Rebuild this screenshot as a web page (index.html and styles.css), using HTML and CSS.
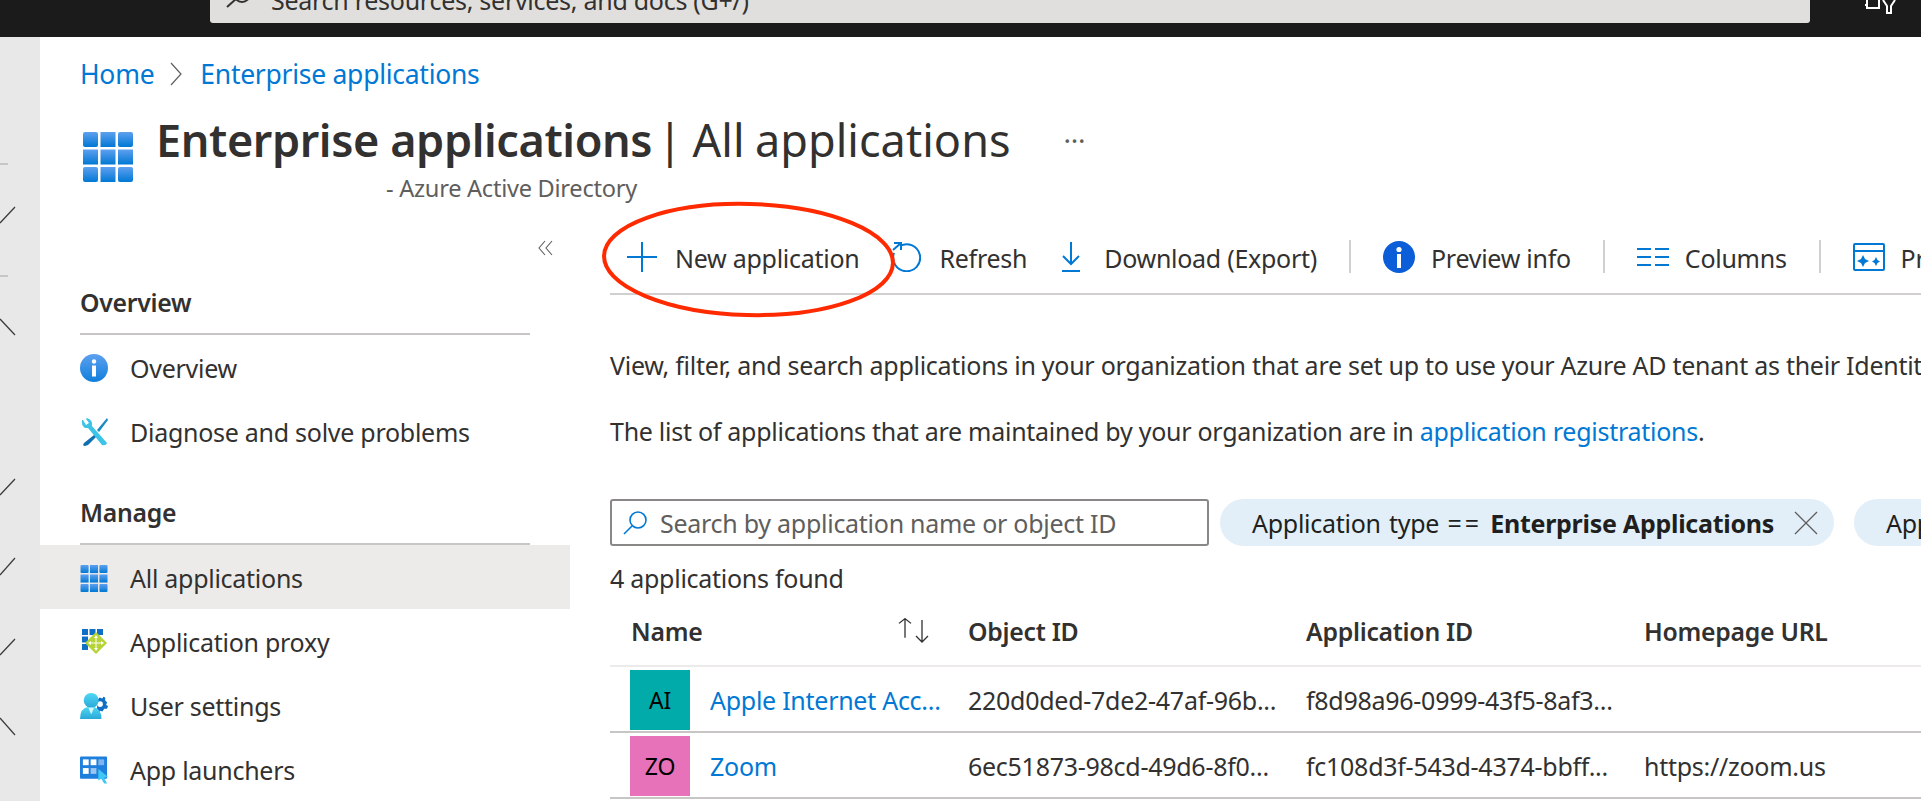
FILE: index.html
```html
<!DOCTYPE html>
<html lang="en">
<head>
    <meta charset="UTF-8">
    <meta name="viewport" content="width=device-width, initial-scale=1.0">
    <title>Enterprise applications | All applications</title>
    <link rel="stylesheet" href="styles.css">
</head>
<body>
    <svg width="0" height="0" class="defs">
        <defs>
            <linearGradient id="gridBlue" x1="0" y1="0" x2="0" y2="1">
                <stop offset="0" stop-color="#5ea0ef"/>
                <stop offset="1" stop-color="#0078d4"/>
            </linearGradient>
            <linearGradient id="infoBlue" x1="0" y1="0" x2="0" y2="1">
                <stop offset="0" stop-color="#5ea0ef"/>
                <stop offset="1" stop-color="#0f7fdc"/>
            </linearGradient>
            <linearGradient id="cyanGrad" x1="0" y1="0" x2="0" y2="1">
                <stop offset="0" stop-color="#4fd8f5"/>
                <stop offset="1" stop-color="#2aa8d8"/>
            </linearGradient>
            <g id="grid9">
                <rect x="0" y="0" width="15" height="15" rx="2"/><rect x="17.5" y="0" width="15" height="15"/><rect x="35" y="0" width="15" height="15" rx="2"/>
                <rect x="0" y="17.5" width="15" height="15"/><rect x="17.5" y="17.5" width="15" height="15"/><rect x="35" y="17.5" width="15" height="15"/>
                <rect x="0" y="35" width="15" height="15" rx="2"/><rect x="17.5" y="35" width="15" height="15"/><rect x="35" y="35" width="15" height="15" rx="2"/>
            </g>
        </defs>
    </svg>

    <header class="topbar">
        <div class="globalsearch">
            <svg class="globalsearch-icon" viewBox="0 0 24 24" width="24" height="24"><path d="M1 23 L10 15" stroke="#323130" stroke-width="2" fill="none"/><circle cx="16" cy="10" r="8" stroke="#323130" stroke-width="2" fill="none"/></svg>
            <span>Search resources, services, and docs (G+/)</span>
        </div>
        <svg class="topbar-icon" viewBox="0 0 32 14" width="32" height="14">
            <path d="M3 0 V5 H1 M3 5 V8 H15 V0 M19 0 L23 6 V13 H27 V6 L31 0" stroke="#fff" stroke-width="2" fill="none"/>
        </svg>
    </header>

    <div class="shell">
        <nav class="rail">
            <svg width="40" height="764" viewBox="0 0 40 764">
                <g stroke="#3b3a39" stroke-width="1.2" fill="none">
                    <path d="M0 127 H8" stroke="#c8c6c4" stroke-width="2"/>
                    <path d="M0 186 L15 170"/>
                    <path d="M0 239 H8" stroke="#c8c6c4" stroke-width="2"/>
                    <path d="M0 282 L15 298"/>
                    <path d="M0 458 L15 442"/>
                    <path d="M0 538 L15 521"/>
                    <path d="M0 618 L15 602"/>
                    <path d="M0 681 L15 698"/>
                </g>
            </svg>
        </nav>

        <div class="page">
            <div class="crumbs">
                <a href="#">Home</a>
                <svg class="crumb-sep" viewBox="0 0 12 24" width="12" height="24"><path d="M1 1 L11 12 L1 23" stroke="#605e5c" stroke-width="1.2" fill="none"/></svg>
                <a href="#">Enterprise applications</a>
            </div>

            <div class="pagehead">
                <svg class="pagehead-icon" viewBox="0 0 50 50" width="50" height="50"><use href="#grid9" fill="url(#gridBlue)"/></svg>
                <div class="pagehead-text">
                    <h1><b>Enterprise applications</b> <span class="title-rest">| All applications</span></h1>
                    <div class="subtitle">- Azure Active Directory</div>
                </div>
                <div class="more">···</div>
            </div>

            <div class="columns">
                <aside class="sidebar">
                    <div class="collapse">
                        <svg viewBox="0 0 16 16" width="16" height="16"><path d="M7 1 L1 8 L7 15 M14 1 L8 8 L14 15" stroke="#605e5c" stroke-width="1.1" fill="none"/></svg>
                    </div>
                    <div class="side-head">Overview</div>
                    <a class="side-item" href="#">
                        <svg viewBox="0 0 28 28" width="28" height="28"><circle cx="14" cy="14" r="14" fill="url(#infoBlue)"/><circle cx="14" cy="7.5" r="2.2" fill="#fff"/><rect x="12" y="11.5" width="4" height="11" fill="#fff"/></svg>
                        Overview
                    </a>
                    <a class="side-item" href="#">
                        <svg viewBox="0 0 28 28" width="28" height="28">
                            <path d="M27 0 L17 12 L19 14 L28 2 Z" fill="#1a8ac4"/>
                            <path d="M14 17 L4 25 Q2 28 5 28 L8 27 L17 18 L15 15 Z" fill="#0f6fb0"/>
                            <path d="M2 2 Q1 7 5 10 L8 10 L22 27 Q26 28 27 25 L12 8 Q13 2 7 0 L6 1 L9 5 L6 7 L3 2 Z" fill="#3cc3e6"/>
                        </svg>
                        Diagnose and solve problems
                    </a>
                    <div class="side-head side-head-2">Manage</div>
                    <a class="side-item side-item-active" href="#">
                        <svg viewBox="0 0 50 50" width="27" height="27"><use href="#grid9" fill="url(#gridBlue)"/></svg>
                        All applications
                    </a>
                    <a class="side-item" href="#">
                        <svg viewBox="0 0 28 28" width="28" height="28">
                            <g fill="#0f6fc6"><rect x="2" y="1" width="6" height="6"/><rect x="9.5" y="1" width="6" height="6"/><rect x="17" y="1" width="6" height="6"/><rect x="2" y="8.5" width="6" height="6"/><rect x="2" y="16" width="6" height="6"/></g>
                            <path d="M16 4 L27 15 L16 26 L5 15 Z" fill="#b4d334"/>
                            <path d="M16 7 L18 10 H14 Z M16 23 L18 20 H14 Z M8 15 L11 13 V17 Z M24 15 L21 13 V17 Z" fill="#fff"/>
                            <path d="M11 15 H21 M16 10 V20" stroke="#fff" stroke-width="1"/>
                        </svg>
                        Application proxy
                    </a>
                    <a class="side-item" href="#">
                        <svg viewBox="0 0 30 28" width="30" height="28">
                            <path d="M19 7 L21 5 L24 6 L25 4 L27 5 L27 8 L29 10 L28 13 L30 14 L29 17 L26 17 L24 20 L22 19 L20 21 L18 19 Z" fill="#0f6fc6"/>
                            <circle cx="21.5" cy="12" r="3" fill="#fff"/>
                            <circle cx="12" cy="8" r="8" fill="url(#cyanGrad)"/>
                            <path d="M0 28 Q0 16 9 15 H15 Q23 17 23 28 Z" fill="url(#cyanGrad)"/>
                            <path d="M9 16 H15 L12 23 Z" fill="#d8f5fc"/>
                        </svg>
                        User settings
                    </a>
                    <a class="side-item" href="#">
                        <svg viewBox="0 0 29 28" width="29" height="28">
                            <rect x="0" y="0" width="28" height="23" rx="1" fill="#1f7fdc"/>
                            <rect x="3" y="3" width="6" height="6" fill="#fff"/><rect x="11" y="3" width="6" height="6" fill="#fff"/><rect x="19" y="3" width="6" height="6" fill="#7fb4ee"/>
                            <rect x="3" y="12" width="6" height="6" fill="#fff"/><rect x="11" y="12" width="6" height="6" fill="#9cc6f2"/>
                            <path d="M19 13 L29 21 L25 22 L28 28 L25 28 L22 23 L19 25 Z" fill="#3fc8f5"/>
                        </svg>
                        App launchers
                    </a>
                </aside>

                <main class="content">
                    <div class="toolbar">
                        <button class="tool tool-new">
                            <svg viewBox="0 0 30 30" width="30" height="30"><path d="M15 0 V30 M0 15 H30" stroke="#0078d4" stroke-width="2" fill="none"/></svg>
                            New application
                        </button>
                        <button class="tool tool-refresh">
                            <svg viewBox="0 0 31 30" width="31" height="30"><path d="M9 3 A13.500 13.500 0 1 1 3 10" stroke="#0078d4" stroke-width="2" fill="none" transform="translate(1 1)"/><path d="M3 8 L11 1 M4 1 H11 V8" stroke="#0078d4" stroke-width="2" fill="none"/></svg>
                            Refresh
                        </button>
                        <button class="tool tool-download">
                            <svg viewBox="0 0 18 30" width="18" height="30"><path d="M9 0 V22 M1 14 L9 22 L17 14 M0 29 H18" stroke="#0078d4" stroke-width="2" fill="none"/></svg>
                            Download (Export)
                        </button>
                        <span class="tool-sep"></span>
                        <button class="tool tool-preview">
                            <svg viewBox="0 0 32 32" width="32" height="32"><circle cx="16" cy="16" r="16" fill="#0b5ed7"/><circle cx="16" cy="8.5" r="2.6" fill="#fff"/><rect x="14" y="13" width="4" height="14" fill="#fff"/></svg>
                            Preview info
                        </button>
                        <span class="tool-sep"></span>
                        <button class="tool tool-columns">
                            <svg viewBox="0 0 32 18" width="32" height="18"><path d="M0 1 H14 M18 1 H32 M0 9 H14 M18 9 H32 M0 17 H14 M18 17 H32" stroke="#0078d4" stroke-width="2" fill="none"/></svg>
                            Columns
                        </button>
                        <span class="tool-sep"></span>
                        <button class="tool tool-features">
                            <svg viewBox="0 0 32 28" width="32" height="28"><rect x="1" y="1" width="30" height="26" rx="1" stroke="#0078d4" stroke-width="2" fill="none"/><path d="M1 8 H31" stroke="#0078d4" stroke-width="2"/><path d="M10 12 L12 16 L16 18 L12 20 L10 24 L8 20 L4 18 L8 16 Z M23 14 L24.5 17 L27 18.500 L24.500 20 L23 23 L21.500 20 L19 18.500 L21.500 17 Z" fill="#0078d4"/></svg>
                            Preview features
                        </button>
                    </div>

                    <div class="ellipse">
                        <svg viewBox="0 0 297 119" width="297" height="119"><ellipse cx="148.500" cy="59.500" rx="144.500" ry="55.500" transform="rotate(1.500 148.500 59.500)" stroke="#ff2a00" stroke-width="4" fill="none"/></svg>
                    </div>

                    <p class="intro">View, filter, and search applications in your organization that are set up to use your Azure AD tenant as their Identity Provider.</p>
                    <p class="intro">The list of applications that are maintained by your organization are in <a href="#">application registrations</a>.</p>

                    <div class="filters">
                        <div class="searchbox">
                            <svg viewBox="0 0 24 24" width="24" height="24"><circle cx="15" cy="9" r="8" stroke="#0078d4" stroke-width="1.600" fill="none"/><path d="M1 23 L9 15" stroke="#0078d4" stroke-width="1.600"/></svg>
                            <span>Search by application name or object ID</span>
                        </div>
                        <div class="chip">
                            <span class="chip-label">Application type <span class="chip-op">==</span> <b>Enterprise Applications</b></span>
                            <svg viewBox="0 0 24 24" width="24" height="24"><path d="M1 1 L23 23 M23 1 L1 23" stroke="#605e5c" stroke-width="1.300"/></svg>
                        </div>
                        <div class="chip chip-cut"><span>Application status</span></div>
                    </div>

                    <div class="count">4 applications found</div>

                    <div class="row row-head">
                        <div class="col-name">Name
                            <svg viewBox="0 0 32 26" width="32" height="26"><path d="M7 26 V2 M1 8 L7 2 L13 8" stroke="#323130" stroke-width="1.300" fill="none" transform="translate(0 -1) scale(1 .8)"/><path d="M24 2 V24 M18 18 L24 24 L30 18" stroke="#323130" stroke-width="1.300" fill="none"/></svg>
                        </div>
                        <div class="col-obj">Object ID</div>
                        <div class="col-app">Application ID</div>
                        <div class="col-url">Homepage URL</div>
                    </div>
                    <div class="row row-data">
                        <div class="col-name"><span class="avatar avatar-teal">AI</span><a href="#">Apple Internet Acc...</a></div>
                        <div class="col-obj">220d0ded-7de2-47af-96b...</div>
                        <div class="col-app">f8d98a96-0999-43f5-8af3...</div>
                        <div class="col-url"></div>
                    </div>
                    <div class="row row-data">
                        <div class="col-name"><span class="avatar avatar-pink">ZO</span><a href="#">Zoom</a></div>
                        <div class="col-obj">6ec51873-98cd-49d6-8f0...</div>
                        <div class="col-app">fc108d3f-543d-4374-bbff...</div>
                        <div class="col-url">https://zoom.us</div>
                    </div>
                </main>
            </div>
        </div>
    </div>
</body>
</html>
```

FILE: styles.css
```css
html, body {
    margin: 0;
    height: 801px;
    overflow: hidden;
}
body {
    font-family: "Noto Sans", "Open Sans", sans-serif;
    font-size: 25px;
    letter-spacing: -0.27px;
    color: #323130;
    background-color: #fff;
}
a {
    color: #0078d4;
    text-decoration: none;
}
.defs {
    position: absolute;
}

/* top bar */
.topbar {
    height: 37px;
    background-color: #1b1b1b;
    display: flex;
    align-items: flex-start;
    overflow: hidden;
}
.globalsearch {
    width: 1600px;
    height: 23px;
    margin-left: 210px;
    padding-left: 16px;
    box-sizing: border-box;
    background-color: #e0dfdd;
    border-radius: 0 0 3px 3px;
    display: flex;
    align-items: flex-end;
    gap: 21px;
    overflow: hidden;
}
.globalsearch-icon {
    flex: none;
    margin-bottom: 15px;
}
.globalsearch span {
    white-space: nowrap;
    line-height: 34px;
    margin-bottom: 6px;
}
.topbar-icon {
    margin-left: 54px;
}

.shell {
    display: flex;
    height: 764px;
}
.rail {
    flex: none;
    width: 40px;
    background-color: #e8e8e8;
}
.page {
    flex: 1;
    min-width: 0;
    overflow: hidden;
}

/* breadcrumb and title */
.crumbs {
    height: 32px;
    margin-top: 21px;
    margin-bottom: 1px;
    padding-left: 40px;
    display: flex;
    align-items: center;
    font-size: 26.500px;
}
.crumb-sep {
    margin: 0 18px 0 16px;
}
.pagehead {
    position: relative;
    height: 149px;
    padding-left: 43px;
    display: flex;
    align-items: flex-start;
}
.pagehead-icon {
    margin-top: 41px;
}
.pagehead-text {
    margin-left: 23px;
    position: relative;
}
.pagehead-text h1 {
    margin: 19px 0 0 0;
    font-size: 45px;
    font-weight: 400;
    line-height: 60px;
    color: #323130;
    white-space: nowrap;
    letter-spacing: -0.4px;
}
.pagehead-text h1 b {
    font-weight: 600;
}
.title-rest {
    margin-left: -6px;
    letter-spacing: 0.05px;
    word-spacing: -1.5px;
}
.subtitle {
    margin: 4px 0 0 230px;
    font-size: 23.600px;
    line-height: 28px;
    color: #605e5c;
}
.more {
    margin: 19px 0 0 53px;
    line-height: 60px;
    font-size: 28px;
    color: #605e5c;
}

.columns {
    display: flex;
}

/* left menu */
.sidebar {
    flex: none;
    width: 530px;
}
.collapse {
    height: 32px;
    padding: 0 16px 0 0;
    display: flex;
    justify-content: flex-end;
    align-items: center;
    box-sizing: border-box;
    padding-bottom: 16px;
}
.side-head {
    height: 63px;
    box-sizing: border-box;
    margin-left: 40px;
    width: 450px;
    padding-top: 12px;
    line-height: 36px;
    font-weight: 600;
    font-size: 24.800px;
    border-bottom: 2px solid #c8c6c4;
    color: #323130;
}
.side-head-2 {
    margin-top: 18px;
}
.side-head + .side-item {
    margin-top: 1px;
}
.side-item {
    display: flex;
    align-items: center;
    height: 64px;
    box-sizing: border-box;
    padding-left: 40px;
    color: #323130;
}
.side-head-2 ~ .side-item {
    padding-top: 2px;
}
.side-item svg {
    flex: none;
    width: 28px;
    margin-right: 22px;
}
.side-item-active {
    background-color: #edebe9;
    margin-top: 0 !important;
}

/* content */
.content {
    flex: 1;
    min-width: 0;
    margin-left: 40px;
    position: relative;
}
.toolbar {
    height: 55px;
    box-sizing: border-box;
    border-bottom: 2px solid #d2d0ce;
    display: flex;
    align-items: flex-start;
    white-space: nowrap;
}
.tool {
    display: flex;
    align-items: center;
    height: 36px;
    padding: 0;
    border: none;
    background: none;
    font: inherit;
    letter-spacing: inherit;
    color: #323130;
    flex: none;
}
.tool svg {
    flex: none;
    margin-top: -2px;
    margin-right: 16px;
}
.tool-new {
    margin-left: 17px;
}
.tool-new svg {
    margin-right: 18px;
}
.tool-refresh {
    margin-left: 31px;
}
.tool-refresh svg {
    margin-right: 18px;
}
.tool-download {
    margin-left: 35px;
}
.tool-download svg {
    margin-right: 24px;
}
.tool-sep {
    flex: none;
    width: 2px;
    height: 33px;
    background-color: #d2d0ce;
    margin: 0 32px;
}
.ellipse {
    position: absolute;
    left: -10px;
    top: -40px;
    pointer-events: none;
}
.intro {
    margin: 0;
    height: 66px;
    line-height: 66px;
    white-space: nowrap;
}
.intro:first-of-type {
    margin-top: 37px;
}
.filters {
    display: flex;
    align-items: stretch;
    height: 47px;
    margin-top: 35px;
    white-space: nowrap;
}
.searchbox {
    flex: none;
    width: 599px;
    box-sizing: border-box;
    border: 2px solid #8a8886;
    border-radius: 3px;
    padding-left: 11px;
    display: flex;
    align-items: center;
    gap: 13px;
    color: #605e5c;
}
.chip {
    flex: none;
    margin-left: 11px;
    width: 614px;
    box-sizing: border-box;
    padding-left: 32px;
    border-radius: 24px;
    background-color: #e2eff9;
    display: flex;
    align-items: center;
    gap: 20px;
    color: #201f1e;
}
.chip-label {
    word-spacing: 2px;
}
.chip-op {
    letter-spacing: 3px;
}
.chip b {
    font-weight: 700;
    word-spacing: 0;
}
.chip-cut {
    margin-left: 20px;
}
.count {
    height: 32px;
    line-height: 32px;
    margin-top: 16px;
}

/* table */
.row {
    display: flex;
    align-items: center;
    white-space: nowrap;
}
.row-head {
    height: 71px;
    margin-top: 2px;
    box-sizing: border-box;
    font-weight: 600;
    font-size: 24.800px;
    border-bottom: 2px solid #edebe9;
    padding-bottom: 0;
}
.row-data {
    height: 66px;
    box-sizing: border-box;
    border-bottom: 2px solid #c8c6c4;
    padding-top: 1px;
}
.col-name {
    flex: none;
    width: 358px;
    padding-left: 20px;
    box-sizing: border-box;
    display: flex;
    align-items: center;
}
.row-head .col-name {
    padding-left: 21px;
}
.row-head .col-name svg {
    margin-left: auto;
    margin-right: 38px;
}
.col-obj {
    flex: none;
    width: 338px;
}
.col-app {
    flex: none;
    width: 338px;
}
.col-url {
    flex: 1;
}
.avatar {
    flex: none;
    width: 60px;
    height: 60px;
    margin-right: 20px;
    display: flex;
    align-items: center;
    justify-content: center;
    color: #000;
    font-size: 23px;
}
.avatar-teal {
    background-color: #00aba9;
}
.avatar-pink {
    background-color: #e772b9;
}
```
